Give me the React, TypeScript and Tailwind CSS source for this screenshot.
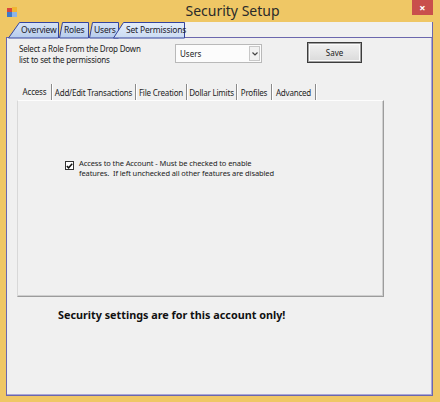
import React from "react";

const topTabs = [
  { label: "Overview", w: "w-[51px]", px: 51, slant: 11, selected: false, ml: "ml-[2px]" },
  { label: "Roles", w: "w-[30px]", px: 30, slant: 3, selected: false, ml: "ml-0" },
  { label: "Users", w: "w-[30px]", px: 30, slant: 3, selected: false, ml: "ml-0" },
  { label: "Set Permissions", w: "w-[72px]", px: 72, slant: 10, selected: true, ml: "-ml-[6px]" },
];

const pageTabs = [
  { label: "Access", w: "w-[34px]", selected: true },
  { label: "Add/Edit Transactions", w: "w-[84px]", selected: false },
  { label: "File Creation", w: "w-[51px]", selected: false },
  { label: "Dollar Limits", w: "w-[50px]", selected: false },
  { label: "Profiles", w: "w-[35px]", selected: false },
  { label: "Advanced", w: "w-[44px]", selected: false },
];

function AppIcon() {
  return (
    <svg width="10" height="10" viewBox="0 0 10 10">
      <rect x="0" y="1" width="5" height="4" fill="#d8463c" />
      <rect x="5" y="0" width="5" height="5" fill="#f2b632" />
      <rect x="0" y="5" width="5" height="5" fill="#3e78c8" />
      <rect x="5" y="5" width="5" height="5" fill="#8fb4e6" />
    </svg>
  );
}

function TopTab({ tab, idx }: { tab: (typeof topTabs)[number]; idx: number }) {
  const s = tab.slant;
  const r = tab.px - 0.5;
  const gid = `toptab-grad-${idx}`;
  return (
    <div className={`relative h-[16px] ${tab.w} ${tab.ml} ${tab.selected ? "z-10" : ""}`}>
      <svg className="absolute inset-0 overflow-visible" width={tab.px} height="16">
        <defs>
          <linearGradient id={gid} x1="0" y1="0" x2="0" y2="1">
            <stop offset="0" stopColor={tab.selected ? "#e4edfa" : "#d6e2f5"} />
            <stop offset="1" stopColor={tab.selected ? "#cbdcf3" : "#b6cced"} />
          </linearGradient>
        </defs>
        <polygon
          points={`0.5,16 ${s + 0.5},0.5 ${r},0.5 ${r},16`}
          fill={`url(#${gid})`}
          stroke="#34449e"
          strokeWidth="1"
        />
      </svg>
      <span
        className={`relative block h-full whitespace-nowrap pt-[2px] text-[8.5px] leading-[12px] tracking-[-0.2px] text-[#1a1a2a] ${
          tab.slant > 5 ? "pl-[13px]" : "pl-[5px]"
        }`}
      >
        {tab.label}
      </span>
    </div>
  );
}

export default function App() {
  return (
    <div className="flex h-[402px] w-[440px] flex-col bg-[#efc765] font-['Noto_Sans','Liberation_Sans',sans-serif] text-[#1b1b1b]">
      {/* title bar */}
      <div className="flex h-[22px] items-start">
        <div className="pl-[7px] pt-[7px]">
          <AppIcon />
        </div>
        <div className="flex-1 whitespace-nowrap pl-[36px] pt-[2px] text-center text-[14px] leading-[18px] text-[#2a2a2a]">
          Security Setup
        </div>
        <div className="mr-[7px] flex h-[15px] w-[21px] items-center justify-center bg-[#c94f4c] text-[11px] font-bold leading-none text-white">
          ×
        </div>
      </div>

      {/* client */}
      <div className="mb-[6px] ml-[6px] mr-[7px] flex flex-1 flex-col">
        <div className="flex h-[15px] items-start">
          {topTabs.map((t, i) => (
            <TopTab key={t.label} tab={t} idx={i} />
          ))}
          <div className="h-full flex-1 border-r border-[#6b67ad] bg-[#f0f0f0]" />
        </div>

        <div className="flex flex-1 flex-col border border-[#6b67ad] bg-[#f0f0f0] shadow-[inset_-1px_-1px_0_#a9a6d6]">
          {/* role row */}
          <div className="mt-[5px] flex items-start pl-[12px]">
            <div className="w-[156px] whitespace-nowrap text-[8px] leading-[11px] tracking-[-0.2px] text-[#222]">
              Select a Role From the Drop Down
              <br />
              list to set the permissions
            </div>
            <div className="mt-[1px] flex h-[19px] w-[87px] items-center border border-[#b9b9b9] bg-[#fcfcfc]">
              <span className="flex-1 pl-[4px] text-[8px] leading-none text-[#222]">Users</span>
              <div className="mr-[1px] flex h-[15px] w-[11px] items-center justify-center border border-[#c8c8c8] bg-[#f2f2f2]">
                <svg width="6" height="4" viewBox="0 0 6 4">
                  <path d="M0.5 0.5 L3 3 L5.5 0.5" fill="none" stroke="#444" strokeWidth="1.2" />
                </svg>
              </div>
            </div>
            <div className="-mt-[1px] ml-[45px] flex h-[21px] w-[55px] border border-[#3c3c3c] bg-[#a0a0a0] p-[1px]">
              <div className="flex flex-1 items-center justify-center border border-[#fbfbfb] bg-gradient-to-b from-[#f0f0f0] to-[#dcdcdc] text-[8px] leading-none text-[#1a1a1a]">
                Save
              </div>
            </div>
          </div>

          {/* page tabs */}
          <div className="ml-[11px] mt-[19px] flex h-[16px]">
            {pageTabs.map((t) => (
              <div
                key={t.label}
                className={`flex ${t.w} justify-center border-r border-[#8a8a8a] shadow-[1px_0_0_#ffffff] ${
                  t.selected ? "items-start pt-[3px]" : "items-end pb-[2px]"
                }`}
              >
                <span className="whitespace-nowrap text-[8px] leading-[10px] tracking-[-0.2px] text-[#1e1e1e]">{t.label}</span>
              </div>
            ))}
          </div>

          {/* tab page */}
          <div className="ml-[10px] h-[197px] w-[367px] border border-b-[#9c9c9c] border-l-[#d8d8d8] border-r-[#9c9c9c] border-t-[#fdfdfd] shadow-[inset_-1px_-1px_0_#cfcfcf]">
            <div className="ml-[47px] mt-[57px] flex items-start gap-[5px]">
              <div className="mt-[3px] flex h-[9px] w-[9px] items-center justify-center border border-[#333] bg-white">
                <svg width="7" height="6" viewBox="0 0 7 6">
                  <path d="M0.8 3 L2.6 4.8 L6.2 0.8" fill="none" stroke="#111" strokeWidth="1.5" />
                </svg>
              </div>
              <div className="whitespace-nowrap text-[7.5px] leading-[10px] tracking-[-0.1px] text-[#222]">
                Access to the Account - Must be checked to enable
                <br />
                features.&nbsp; If left unchecked all other features are disabled
              </div>
            </div>
          </div>

          <div className="ml-[51px] mt-[11px] whitespace-nowrap text-[10.8px] font-bold leading-[14px] text-[#111]">
            Security settings are for this account only!
          </div>
        </div>
      </div>
    </div>
  );
}
